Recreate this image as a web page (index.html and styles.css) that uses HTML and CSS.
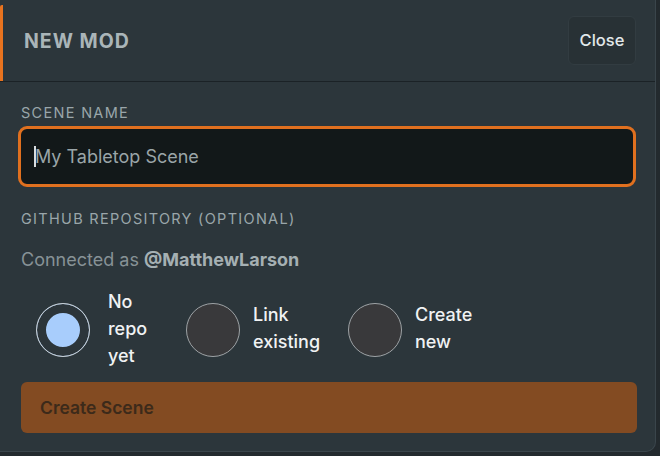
FILE: index.html
```html
<!DOCTYPE html>
<html>
<head>
<meta charset="utf-8">
<link rel="stylesheet" href="styles.css">
</head>
<body>
<div class="panel">
  <header class="head">
    <h1 class="title">NEW MOD</h1>
    <button class="close">Close</button>
  </header>
  <div class="body">
    <label class="label">SCENE NAME</label>
    <div class="input"><span class="caret"></span><span class="ph">My Tabletop Scene</span></div>
    <label class="label gh">GITHUB REPOSITORY (OPTIONAL)</label>
    <p class="conn">Connected as <b>@MatthewLarson</b></p>
    <div class="opts">
      <div class="opt o1"><span class="radio on"></span><span class="ol w1">No repo yet</span></div>
      <div class="opt o2"><span class="radio"></span><span class="ol w2">Link existing</span></div>
      <div class="opt o3"><span class="radio"></span><span class="ol w3">Create new</span></div>
    </div>
    <button class="create">Create Scene</button>
  </div>
</div>
</body>
</html>
```

FILE: styles.css
```css
html, body { margin: 0; padding: 0; }
body {
  width: 660px; height: 456px; overflow: hidden;
  background: #232a2e;
  font-family: Inter, "Noto Sans", sans-serif;
}
.panel {
  width: 656px; height: 452px;
  background: #2c363b;
  border-right: 1px solid #3a454b;
  border-bottom: 1px solid #3a454b;
  border-bottom-right-radius: 10px;
  box-sizing: border-box;
}
.head {
  height: 82px;
  box-sizing: border-box;
  border-bottom: 1px solid #1b2226;
  display: flex; align-items: center; justify-content: space-between;
  padding: 0 19px 0 24px;
  position: relative;
}
.head::before {
  content: ""; position: absolute; left: 0; top: 5px; bottom: 0; width: 3px;
  background: #e8731f; border-top-left-radius: 2px;
}
.title {
  margin: 0; font-size: 19.5px; font-weight: 700; letter-spacing: 1px;
  color: #aab5b8;
}
.close {
  width: 68px; height: 49px; margin-top: -1px;
  background: #283135; border: 1px solid #323c41; border-radius: 6px;
  color: #e2e8ea; font-family: inherit; font-size: 16.5px; font-weight: 500;
}
.body { padding: 22px 19px 0 21px; display: flex; flex-direction: column; }
.label {
  font-size: 14.5px; letter-spacing: 1.3px; color: #9aa6aa; line-height: 18px;
}
.input {
  margin: 4px 0 0 -3px; height: 61px; box-sizing: border-box;
  border: 3px solid #e0701f; border-radius: 9px;
  background: #121819;
  display: flex; align-items: center; padding-left: 13px;
}
.caret { width: 2px; height: 21px; background: #d8dde0; margin-right: -1px; }
.ph { font-size: 18px; color: #9aa5a8; }
.gh { margin-top: 23px; }
.conn { margin: 21px 0 0; font-size: 18px; color: #879296; line-height: 22px; }
.conn b { color: #a5b0b3; font-weight: 700; }
.opts {
  margin: 14px 0 0 15px; height: 90px;
  display: grid; grid-template-columns: 150px 162px auto; align-items: center;
}
.opt { display: flex; align-items: center; gap: 13px; }
.o1 { gap: 18px; }
.radio {
  width: 54px; height: 54px; box-sizing: border-box; flex: none;
  border-radius: 50%; border: 1.5px solid #9ea3a6; background: #39393b;
}
.radio.on {
  background: #a8cdfc;
  border: 1.5px solid #c8d0d6;
  box-shadow: inset 0 0 0 9px #2c353a;
}
.ol { font-size: 18px; line-height: 27px; color: #f0f2f3; font-weight: 500; margin-top: -4px; }
.w1 { width: 45px; }
.w2 { width: 75px; }
.w3 { width: 70px; }
.create {
  margin-top: 7px; height: 51px; width: 616px;
  background: #834b22; border: none; border-radius: 6px;
  text-align: left; padding-left: 19px;
  color: #3c2a1a; font-family: inherit; font-size: 17.5px; font-weight: 600;
}
```
